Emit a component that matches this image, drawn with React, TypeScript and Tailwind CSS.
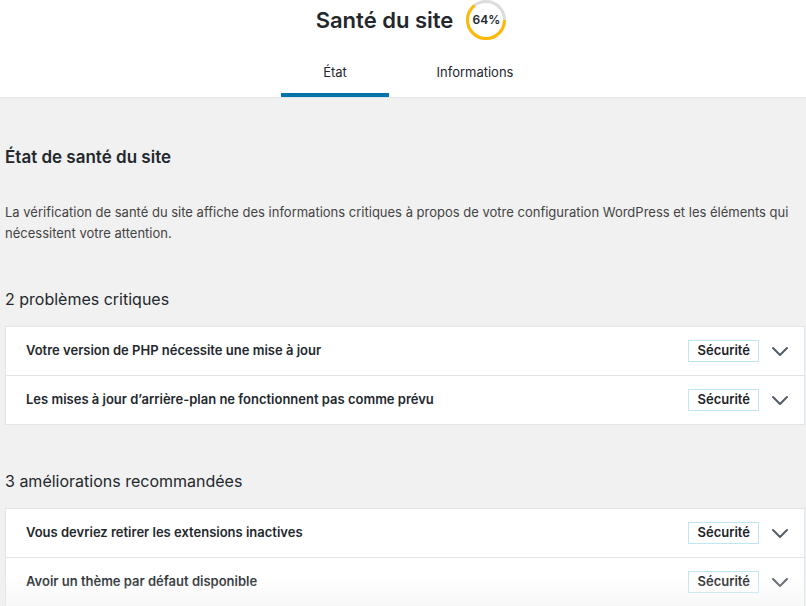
import { ReactNode } from 'react';

const critical = [
  'Votre version de PHP nécessite une mise à jour',
  'Les mises à jour d’arrière-plan ne fonctionnent pas comme prévu',
];

const recommended = [
  'Vous devriez retirer les extensions inactives',
  'Avoir un thème par défaut disponible',
];

function ScoreCircle({ value }: { value: number }) {
  const r = 18.5;
  const c = 2 * Math.PI * r;
  return (
    <div className="relative w-10 h-10 shrink-0">
      <svg viewBox="0 0 40 40" className="w-10 h-10">
        <circle cx="20" cy="20" r={r} fill="none" stroke="#dcdcde" strokeWidth="3" />
        <circle
          cx="20"
          cy="20"
          r={r}
          fill="none"
          stroke="#ffb900"
          strokeWidth="3"
          strokeDasharray={`${(c * value) / 100} ${c}`}
        />
      </svg>
      <span className="absolute inset-0 flex items-center justify-center text-[12px] font-semibold text-[#23282d]">
        {value}%
      </span>
    </div>
  );
}

function Chevron() {
  return (
    <svg viewBox="0 0 20 20" className="w-5 h-5 shrink-0" fill="none" stroke="#555d66" strokeWidth="2" strokeLinecap="round" strokeLinejoin="round">
      <path d="M3 7l7 7 7-7" />
    </svg>
  );
}

function IssueRow({ title }: { title: string }) {
  return (
    <div className="flex items-center h-[49px] last:h-12 pl-5 pr-[14px] border-b border-[#e2e4e7] last:border-b-0">
      <p className="flex-1 text-[13px] font-semibold text-[#23282d]">{title}</p>
      <span className="h-[22px] flex items-center px-2 border border-[#bfe7f3] text-[13px] font-semibold text-[#1d2327]">
        Sécurité
      </span>
      <div className="ml-[11px]">
        <Chevron />
      </div>
    </div>
  );
}

function Section({ heading, children }: { heading: string; children: ReactNode }) {
  return (
    <div className="flex flex-col">
      <h3 className="text-[16px] leading-[23px] text-[#23282d] mb-[15px]">{heading}</h3>
      <div className="bg-white border border-[#e2e4e7]">{children}</div>
    </div>
  );
}

export default function App() {
  return (
    <div
      className="relative h-[606px] overflow-hidden bg-[#f1f1f1]"
      style={{ fontFamily: 'Inter, "Noto Sans", sans-serif' }}
    >
      {/* Header */}
      <div className="bg-white border-b border-[#e2e4e7]">
        <div className="h-10 flex items-center justify-center gap-[13px] pl-4">
          <h1 className="text-[22px] font-semibold text-[#23282d] leading-none">Santé du site</h1>
          <ScoreCircle value={64} />
        </div>
        <div className="flex justify-center pl-1">
          <div className="grid grid-cols-2">
            <a className="mx-4 w-[108px] text-center pt-[22px] pb-[11px] border-b-4 border-[#0073aa] text-[13px] leading-5 text-[#23282d]">
              État
            </a>
            <a className="mx-4 w-[108px] text-center pt-[22px] pb-[11px] border-b-4 border-transparent text-[13px] leading-5 text-[#23282d]">
              Informations
            </a>
          </div>
        </div>
      </div>

      {/* Body */}
      <div className="pl-[5px] pr-px pt-[48px] flex flex-col">
        <h2 className="text-[17px] leading-[23px] font-semibold text-[#23282d]">État de santé du site</h2>
        <p className="mt-[33px] text-[13px] leading-[21px] text-[#444]">
          La vérification de santé du site affiche des informations critiques à propos de votre configuration WordPress et les éléments qui nécessitent votre attention.
        </p>
        <div className="mt-[44px]">
          <Section heading="2 problèmes critiques">
            {critical.map((t) => (
              <IssueRow key={t} title={t} />
            ))}
          </Section>
        </div>
        <div className="mt-[45px]">
          <Section heading="3 améliorations recommandées">
            {recommended.map((t) => (
              <IssueRow key={t} title={t} />
            ))}
          </Section>
        </div>
      </div>

      {/* bottom fade */}
      <div className="pointer-events-none absolute inset-x-0 bottom-0 h-8 bg-gradient-to-b from-transparent to-[#f1f1f1]/50" />
    </div>
  );
}
